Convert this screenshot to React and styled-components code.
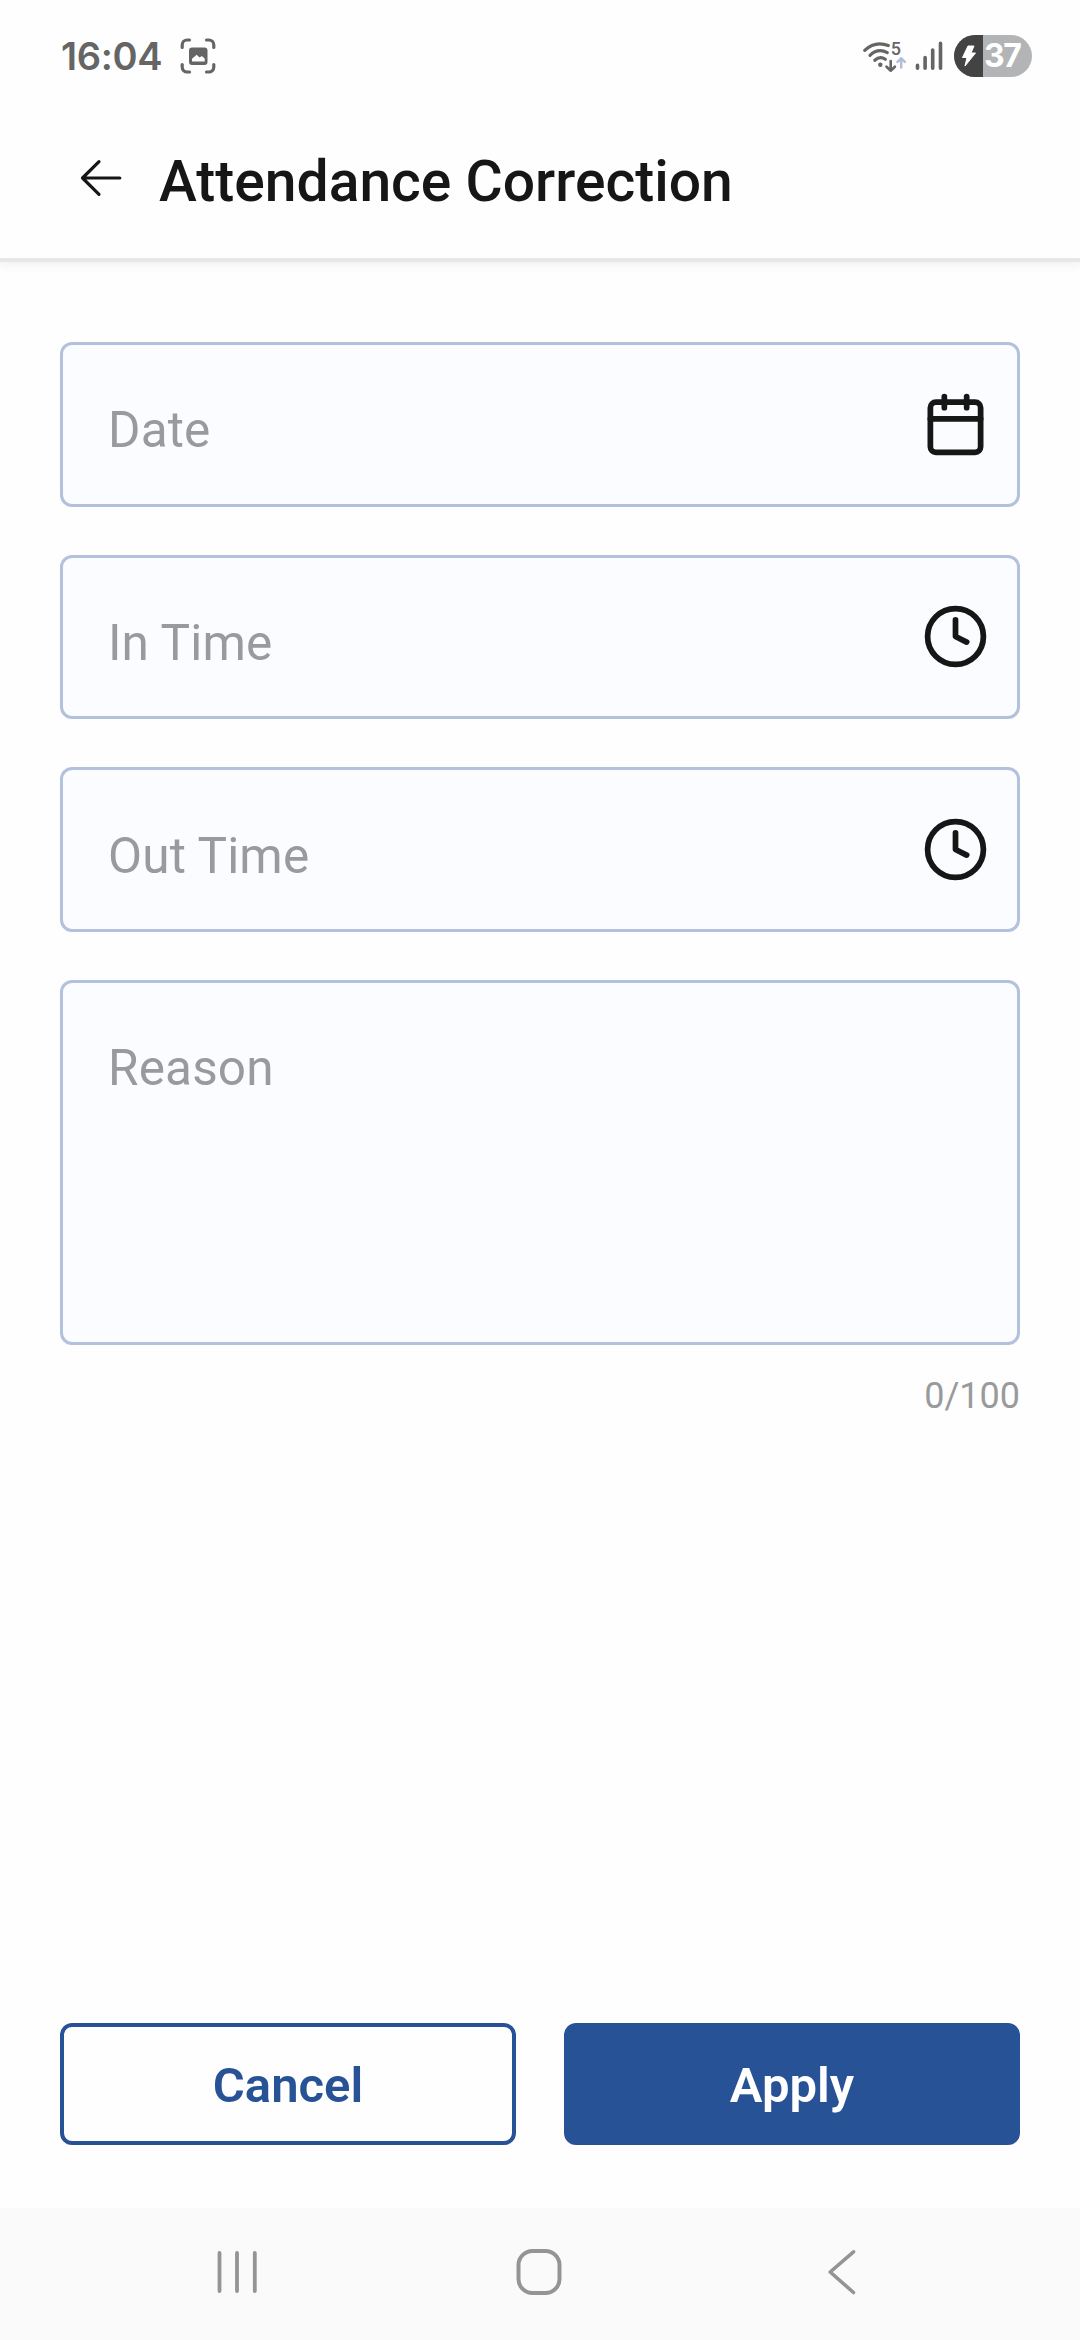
import React from 'react'
import styled, { createGlobalStyle } from 'styled-components'

const colors = {
  primary: '#285296',
  text: '#161616',
  placeholder: '#999a9c',
  fieldBg: '#fafcff',
  fieldBorder: '#b4c1dc',
  status: '#656565',
  nav: '#949494'
}

const fields = [
  { id: 'date', label: 'Date', icon: 'calendar' },
  { id: 'in', label: 'In Time', icon: 'clock' },
  { id: 'out', label: 'Out Time', icon: 'clock' }
]

const CaptureIcon = () => (
  <svg width="36" height="36" viewBox="0 0 36 36" fill="none" stroke={colors.status} strokeWidth="3.2" strokeLinecap="round">
    <path d="M2.2 9.5V7a5 5 0 0 1 5-5h2.3M26.5 2h2.3a5 5 0 0 1 5 5v2.5M33.8 26.5V29a5 5 0 0 1-5 5h-2.3M9.5 34H7.2a5 5 0 0 1-5-5v-2.5" />
    <rect x="9" y="9.5" width="18.5" height="17.5" rx="3" fill={colors.status} stroke="none" />
    <path d="M12 23.5v-2.7l4.6-4 3 2.8 2.2-1.5 2.9 2.3v3.1z" fill="#fff" stroke="none" />
  </svg>
)

const WifiIcon = () => (
  <svg width="45" height="42" viewBox="0 0 45 42" fill="none" stroke={colors.status} strokeWidth="3.2" strokeLinecap="round" strokeLinejoin="round">
    <path d="M2.7 15.3Q13 5.5 26.3 10.5M8 20.3Q16 12.8 25.3 17.6M12.8 25.2Q18 20.5 23.3 24.3" />
    <circle cx="18.3" cy="29.7" r="2.2" fill={colors.status} stroke="none" />
    <text x="28.8" y="20" fontFamily="Roboto, sans-serif" fontSize="18" fontWeight="500" fill={colors.status} stroke="none">5</text>
    <path d="M28.7 26v9.7m-4.2-4 4.2 4 4.2-4" strokeWidth="2.6" />
    <path d="M39.2 32.5v-9.2m-3.7 3.6 3.7-3.6 3.7 3.6" stroke="#b3bdda" strokeWidth="2.5" />
  </svg>
)

const SignalIcon = () => (
  <svg width="28" height="30" viewBox="0 0 28 30" stroke={colors.status} strokeWidth="3.6" strokeLinecap="round">
    <path d="M2.5 24.2v3M10.1 16.5v10.7M17.7 9v18.2M25.5 2.4v24.8" />
  </svg>
)

const BoltIcon = () => (
  <svg width="16" height="22" viewBox="0 0 16 22" fill="#fff" stroke="#fff" strokeWidth="1" strokeLinejoin="round">
    <path d="M7 1h6l-3 7h4.5L4 21l2-8.5H1.5z" />
  </svg>
)

const BackArrow = () => (
  <svg width="42" height="38" viewBox="0 0 42 38" fill="none" stroke={colors.text} strokeWidth="3.2" strokeLinecap="round" strokeLinejoin="round">
    <path d="M39.8 19H2.5M19 2.7 2.5 19 19 35.3" />
  </svg>
)

const FieldIcon = ({ name }) => (
  <svg width="67" height="67" viewBox="0 0 24 24" fill="none" stroke={colors.text} strokeWidth="2.05" strokeLinecap="round" strokeLinejoin="round">
    {name === 'calendar' ? (
      <>
        <rect x="3" y="4" width="18" height="18" rx="2" />
        <path d="M16 2v4M8 2v4M3 10h18" />
      </>
    ) : (
      <>
        <circle cx="12" cy="12" r="10" />
        <path d="M12 6v6l4 2" />
      </>
    )}
  </svg>
)

const RecentsIcon = () => (
  <svg width="46" height="48" viewBox="0 0 46 48" stroke={colors.nav} strokeWidth="3.8" strokeLinecap="round">
    <path d="M5.5 5v38M23 5v38M40.8 5v38" />
  </svg>
)

const HomeIcon = () => (
  <svg width="48" height="48" viewBox="0 0 48 48" fill="none" stroke={colors.nav} strokeWidth="4">
    <rect x="3.5" y="3" width="41" height="42" rx="14" />
  </svg>
)

const NavBackIcon = () => (
  <svg width="30" height="48" viewBox="0 0 30 48" fill="none" stroke={colors.nav} strokeWidth="3.6" strokeLinecap="round" strokeLinejoin="round">
    <path d="M26.5 3.8 3.2 24l23.3 20.5" />
  </svg>
)

export default function App() {
  return (
    <Screen>
      <GlobalStyle />
      <StatusBar>
        <Clock>16:04</Clock>
        <CaptureIcon />
        <StatusRight>
          <WifiIcon />
          <SignalIcon />
          <Battery>
            <BatteryLevel><BoltIcon /></BatteryLevel>
            <BatteryText>37</BatteryText>
          </Battery>
        </StatusRight>
      </StatusBar>
      <Header>
        <BackArrow />
        <Title>Attendance Correction</Title>
      </Header>
      <Form>
        {fields.map(item => (
          <Field key={item.id}>
            <Placeholder>{item.label}</Placeholder>
            <FieldIcon name={item.icon} />
          </Field>
        ))}
        <Field $tall>
          <Placeholder>Reason</Placeholder>
        </Field>
        <Counter>0/100</Counter>
      </Form>
      <Actions>
        <Button>Cancel</Button>
        <Button $filled>Apply</Button>
      </Actions>
      <NavBar>
        <RecentsIcon />
        <HomeIcon />
        <NavBackIcon />
      </NavBar>
    </Screen>
  )
}

const GlobalStyle = createGlobalStyle`
  * {
    box-sizing: border-box;
  }
  body {
    margin: 0;
    background: #fefefe;
    font-family: Roboto, sans-serif;
  }
  svg {
    display: block;
    flex-shrink: 0;
  }
`

const Screen = styled.div`
  width: 1080px;
  height: 2340px;
  display: flex;
  flex-direction: column;
  overflow: hidden;
  background: #fefefe;
`

const StatusBar = styled.div`
  height: 112px;
  flex-shrink: 0;
  display: flex;
  align-items: center;
  padding: 0 48px 0 61px;
`

const Clock = styled.span`
  width: 119px;
  color: ${colors.status};
  font-family: Inter, sans-serif;
  font-size: 38px;
  font-weight: 600;
  line-height: 46px;
  letter-spacing: -0.3px;
`

const StatusRight = styled.div`
  margin-left: auto;
  display: flex;
  align-items: center;
  svg + svg {
    margin-left: 8px;
  }
`

const Battery = styled.div`
  width: 78px;
  height: 42px;
  margin-left: 11px;
  display: flex;
  border-radius: 21px;
  overflow: hidden;
  background: #b3b4b6;
`

const BatteryLevel = styled.div`
  width: 29px;
  display: flex;
  align-items: center;
  justify-content: center;
  background: #434343;
`

const BatteryText = styled.span`
  padding-left: 1px;
  color: #fff;
  font-family: Inter, sans-serif;
  font-size: 32px;
  font-weight: 700;
  line-height: 42px;
  letter-spacing: -1.5px;
`

const Header = styled.header`
  height: 146px;
  flex-shrink: 0;
  display: flex;
  align-items: center;
  padding: 0 0 14px 80px;
  box-shadow: 0 4px 0 #e7e7e7, 0 5px 10px 2px rgba(0, 0, 0, 0.06);
  clip-path: inset(0 0 -24px 0);
`

const Title = styled.h1`
  margin: 7px 0 0 37px;
  color: ${colors.text};
  font-size: 57px;
  font-weight: 500;
  line-height: 66px;
  white-space: nowrap;
`

const Form = styled.main`
  flex: 1;
  display: flex;
  flex-direction: column;
  gap: 48px;
  padding: 84px 60px 0;
`

const Field = styled.div`
  height: ${props => (props.$tall ? '365px' : '164.67px')};
  flex-shrink: 0;
  display: flex;
  align-items: ${props => (props.$tall ? 'flex-start' : 'center')};
  justify-content: space-between;
  padding: ${props => (props.$tall ? '45px' : '0')} 28px 0 45px;
  border: 3px solid ${colors.fieldBorder};
  border-radius: 12px;
  background: ${colors.fieldBg};
`

const Placeholder = styled.span`
  padding-top: 12px;
  color: ${colors.placeholder};
  font-size: 49.5px;
  line-height: 56px;
  letter-spacing: 0.15px;
`

const Counter = styled.span`
  margin-top: -27px;
  align-self: flex-end;
  color: ${colors.placeholder};
  font-size: 36px;
  line-height: 60px;
`

const Actions = styled.div`
  display: flex;
  gap: 48px;
  padding: 0 60px 63px;
`

const Button = styled.button`
  flex: 1;
  height: 122px;
  padding: 2px 0 0;
  border: 4px solid ${colors.primary};
  border-radius: 12px;
  background: ${props => (props.$filled ? colors.primary : '#fefefe')};
  color: ${props => (props.$filled ? '#fff' : colors.primary)};
  font-family: inherit;
  font-size: 49px;
  font-weight: 600;
`

const NavBar = styled.nav`
  height: 132px;
  flex-shrink: 0;
  display: grid;
  grid-template-columns: 301px 312px 30px;
  align-items: center;
  padding: 0 0 4px 214px;
  background: #fafafa;
`
